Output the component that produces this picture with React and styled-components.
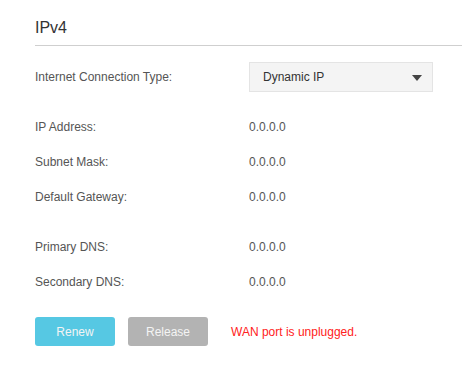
import React from "react";
import styled, { createGlobalStyle } from "styled-components";

const Global = createGlobalStyle`
  html, body { margin: 0; padding: 0; background: #fff; }
  body { font-family: "Liberation Sans", Arial, sans-serif; }
`;

const Page = styled.div`
  padding-left: 35px;
  padding-top: 18px;
`;

const Title = styled.h2`
  margin: 0;
  font-size: 16px;
  line-height: 20px;
  font-weight: normal;
  color: #333;
  padding-bottom: 7px;
  border-bottom: 1px solid #cfcfcf;
`;

const Form = styled.div`
  margin-top: 16px;
  display: flex;
  flex-direction: column;
`;

const Row = styled.div`
  display: flex;
  align-items: center;
  height: ${(p) => (p.$tall ? 30 : 35)}px;
  margin-top: ${(p) => p.$gap || 0}px;
  font-size: 12px;
  color: #555;
`;

const Label = styled.div`
  width: 214px;
  flex: none;
`;

const Value = styled.div`
  color: #555;
`;

const Select = styled.div`
  box-sizing: border-box;
  width: 184px;
  height: 30px;
  background: #f4f4f4;
  border: 1px solid #e4e4e4;
  display: flex;
  align-items: center;
  justify-content: space-between;
  padding: 0 10px 0 13px;
  color: #333;
  font-size: 12px;
`;

const Arrow = styled.span`
  width: 0;
  height: 0;
  border-left: 5px solid transparent;
  border-right: 5px solid transparent;
  border-top: 6px solid #444;
  margin-top: 1px;
`;

const Actions = styled.div`
  display: flex;
  align-items: center;
  margin-top: 18px;
`;

const Button = styled.button`
  width: 80px;
  height: 29px;
  border: none;
  border-radius: 3px;
  background: ${(p) => (p.$variant === "gray" ? "#b3b3b3" : "#56c8e3")};
  color: #f4f4f4;
  font-family: "Liberation Sans", Arial, sans-serif;
  font-size: 12px;
  margin-right: ${(p) => p.$mr}px;
  padding: 0;
  cursor: pointer;
`;

const Message = styled.span`
  color: #ff2121;
  font-size: 12px;
`;

const rows1 = [
  ["IP Address:", "0.0.0.0"],
  ["Subnet Mask:", "0.0.0.0"],
  ["Default Gateway:", "0.0.0.0"],
];
const rows2 = [
  ["Primary DNS:", "0.0.0.0"],
  ["Secondary DNS:", "0.0.0.0"],
];

export default function App() {
  return (
    <>
      <Global />
      <Page>
        <Title>IPv4</Title>
        <Form>
          <Row $tall>
            <Label>Internet Connection Type:</Label>
            <Select>
              <span>Dynamic IP</span>
              <Arrow />
            </Select>
          </Row>
          {rows1.map(([l, v], i) => (
            <Row key={l} $gap={i === 0 ? 17 : 0}>
              <Label>{l}</Label>
              <Value>{v}</Value>
            </Row>
          ))}
          {rows2.map(([l, v], i) => (
            <Row key={l} $gap={i === 0 ? 15 : 0}>
              <Label>{l}</Label>
              <Value>{v}</Value>
            </Row>
          ))}
          <Actions>
            <Button $mr={13}>Renew</Button>
            <Button $variant="gray" $mr={23}>Release</Button>
            <Message>WAN port is unplugged.</Message>
          </Actions>
        </Form>
      </Page>
    </>
  );
}
